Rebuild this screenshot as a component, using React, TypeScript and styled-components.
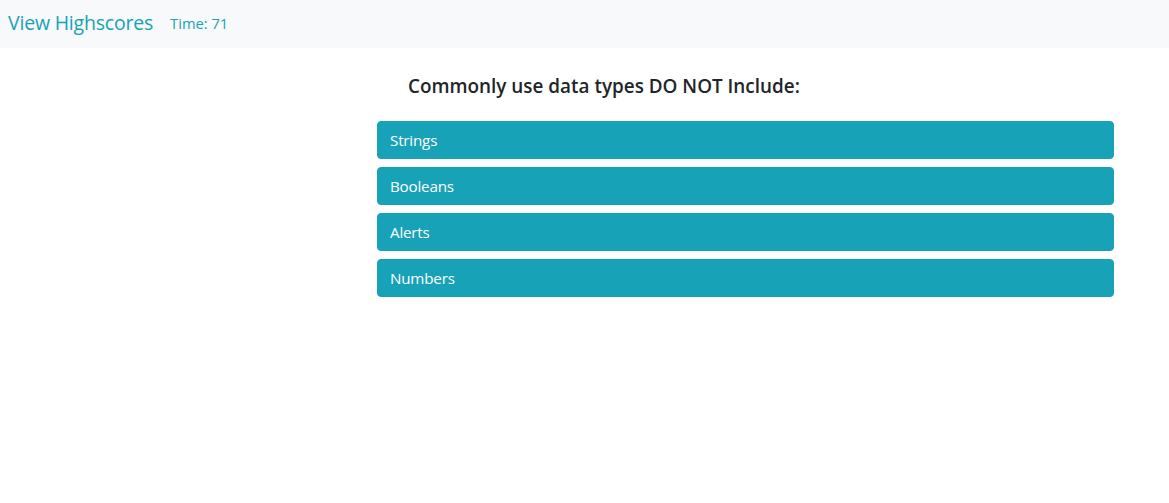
import React from "react";
import styled, { createGlobalStyle } from "styled-components";

const Global = createGlobalStyle`
  html, body { margin: 0; padding: 0; background: #fff; }
  body { font-family: "Open Sans", "Noto Sans", sans-serif; color: #212529; }
`;

const NavBar = styled.nav`
  height: 48px;
  background: #f8f9fa;
  display: flex;
  align-items: center;
  padding: 0 8px 3px;
  box-sizing: border-box;
`;

const Brand = styled.a`
  font-size: 19.5px;
  color: #17a2b8;
  text-decoration: none;
  margin-right: 17px;
  letter-spacing: -0.2px;
`;

const Timer = styled.span`
  font-size: 14.7px;
  color: #17a2b8;
`;

const Main = styled.main`
  display: flex;
  flex-direction: column;
  padding-left: 377px;
  width: 737px;
`;

const Question = styled.h5`
  margin: 26px 0 23px 31px;
  font-size: 18.9px;
  font-weight: 600;
  line-height: 24px;
  color: #212529;
`;

const Choices = styled.div`
  display: flex;
  flex-direction: column;
  gap: 8px;
`;

const Choice = styled.button`
  height: 38px;
  background: #17a2b8;
  border: 1px solid #17a2b8;
  border-radius: 4px;
  color: #fff;
  font-family: inherit;
  font-size: 15.2px;
  text-align: left;
  padding: 0 12px;
  cursor: pointer;
  letter-spacing: -0.2px;
`;

const choices = ["Strings", "Booleans", "Alerts", "Numbers"];

export default function App() {
  return (
    <>
      <Global />
      <NavBar>
        <Brand href="#">View Highscores</Brand>
        <Timer>Time: 71</Timer>
      </NavBar>
      <Main>
        <Question>Commonly use data types DO NOT Include:</Question>
        <Choices>
          {choices.map((c) => (
            <Choice key={c}>{c}</Choice>
          ))}
        </Choices>
      </Main>
    </>
  );
}
